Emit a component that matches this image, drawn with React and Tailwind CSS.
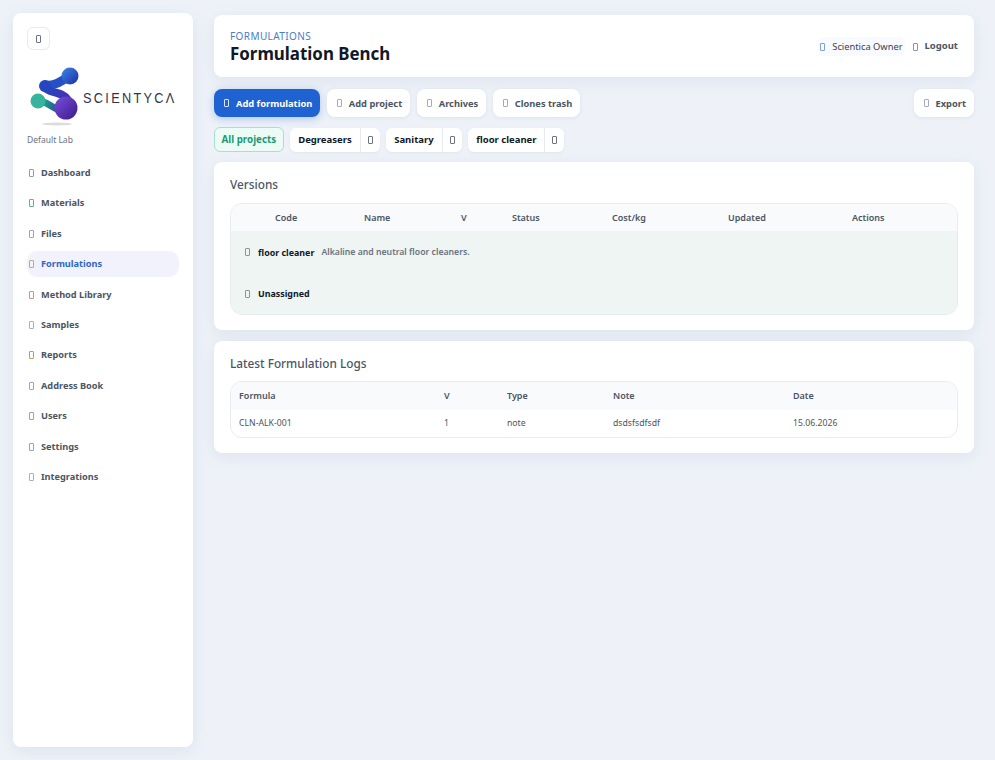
import React from "react";

const font = "font-['Noto_Sans','Open_Sans',sans-serif]";

const navItems = [
  { label: "Dashboard", color: "border-[#7f9fd6]" },
  { label: "Materials", color: "border-[#59b59a]" },
  { label: "Files", color: "border-[#a99ac9]" },
  { label: "Formulations", color: "border-[#c2a878]", active: true },
  { label: "Method Library", color: "border-[#d98a8a]" },
  { label: "Samples", color: "border-[#8fbdb8]" },
  { label: "Reports", color: "border-[#c49a55]" },
  { label: "Address Book", color: "border-[#ab97dc]" },
  { label: "Users", color: "border-[#8ea3c9]" },
  { label: "Settings", color: "border-[#8ea3c9]" },
  { label: "Integrations", color: "border-[#9db0d6]" },
];

const versionCols = ["", "Code", "Name", "V", "Status", "Cost/kg", "Updated", "Actions"];
const versionWidths = ["w-[36px]", "w-[89px]", "w-[97px]", "w-[51px]", "w-[100px]", "w-[116px]", "w-[124px]", "w-[114px]"];
const logCols = ["Formula", "V", "Type", "Note", "Date"];
const logWidths = ["w-[205px]", "w-[63px]", "w-[106px]", "w-[180px]", "w-[173px]"];

// missing-glyph box, the icon font never loaded in the source page
const Tofu = ({ className = "border-[#8b94a3]" }) => (
  <span className={`inline-block h-[8px] w-[5px] shrink-0 rounded-[1px] border ${className}`} />
);

const Logo = () => (
  <div className="flex h-[66px] items-center">
    <svg width="54" height="66" viewBox="0 0 54 66" fill="none" className="shrink-0">
      <defs>
        <linearGradient id="blue" x1="0" y1="0" x2="1" y2="1">
          <stop offset="0" stopColor="#3f86e8" />
          <stop offset="1" stopColor="#1a2fa0" />
        </linearGradient>
        <linearGradient id="neck" gradientUnits="userSpaceOnUse" x1="18" y1="23" x2="41" y2="40">
          <stop offset="0" stopColor="#2149bf" />
          <stop offset="1" stopColor="#4a2cb4" />
        </linearGradient>
        <linearGradient id="teal" gradientUnits="userSpaceOnUse" x1="5" y1="36" x2="36" y2="48">
          <stop offset="0" stopColor="#46c9a8" />
          <stop offset="0.5" stopColor="#1f8d8e" />
          <stop offset="1" stopColor="#3d2aa0" />
        </linearGradient>
        <linearGradient id="purple" x1="0" y1="0" x2="1" y2="1">
          <stop offset="0" stopColor="#7a4fe0" />
          <stop offset="1" stopColor="#3a1a88" />
        </linearGradient>
      </defs>
      <ellipse cx="30" cy="62" rx="15" ry="1.5" fill="#dcdce0" />
      <path d="M18 23 C26 24 32 21 41 15" stroke="#2550c8" strokeWidth="9" strokeLinecap="round" />
      <path d="M17 25 C22 32 34 28 41 38" stroke="url(#neck)" strokeWidth="8" strokeLinecap="round" />
      <path d="M11 39 C20 38 24 47 36 49" stroke="url(#teal)" strokeWidth="7" strokeLinecap="round" />
      <circle cx="43" cy="14" r="8.5" fill="url(#blue)" />
      <circle cx="18" cy="24" r="6" fill="#2447c0" />
      <circle cx="11" cy="39" r="7.5" fill="#37b49d" />
      <circle cx="39" cy="46" r="11.5" fill="url(#purple)" />
    </svg>
    <span className="ml-[2px] mt-[4px] origin-left scale-x-[0.85] text-[15px] leading-none tracking-[2.7px] text-[#33334a] font-['Liberation_Sans',sans-serif]">
      SCIENTYCΛ
    </span>
  </div>
);

const Sidebar = () => (
  <aside className="flex h-[734px] w-[180px] shrink-0 flex-col rounded-[8px] bg-white p-[14px] shadow-[0_4px_16px_rgba(120,140,180,0.14)]">
    <button className="flex h-[23px] w-[23px] items-center justify-center rounded-[6px] border border-[#e6e9ef] bg-white">
      <Tofu className="border-[#6b7280]" />
    </button>
    <div className="mt-[12px]">
      <Logo />
    </div>
    <p className="mt-[6px] text-[8.5px] leading-[12px] text-[#6b7280]">Default Lab</p>
    <nav className="mt-[14px] flex w-[152px] flex-col gap-[4.4px]">
      {navItems.map((item) => (
        <a
          key={item.label}
          className={`flex h-[26px] items-center gap-[7px] rounded-[10px] pl-[2px] text-[9.2px] font-bold ${
            item.active ? "bg-[#f2f2fc] text-[#2f66c4]" : "text-[#4b5563]"
          }`}
        >
          <Tofu className={item.color} />
          {item.label}
        </a>
      ))}
    </nav>
  </aside>
);

const ToolButton = ({ label, primary }) => (
  <button
    className={`flex h-[28px] items-center gap-[7px] rounded-[8px] pl-[10px] pr-[8px] text-[9.3px] font-bold ${
      primary
        ? "bg-[#1f63d2] text-white shadow-[0_2px_8px_rgba(31,99,210,0.3)]"
        : "bg-white text-[#4b5563] shadow-[0_1px_4px_rgba(120,140,180,0.14)]"
    }`}
  >
    <Tofu className={primary ? "border-[#dbe6fa]" : "border-[#a4abb6]"} />
    <span className="pt-[1px]">{label}</span>
  </button>
);

const ProjectChip = ({ label }) => (
  <div className="flex h-[24px] items-center rounded-[6px] bg-white text-[9.5px] font-bold text-[#111827] shadow-[0_1px_3px_rgba(120,140,180,0.12)]">
    <span className="px-[8px] pt-[1px]">{label}</span>
    <span className="flex h-full w-[20px] items-center justify-center border-l border-[#e8ebf0]">
      <Tofu className="border-[#6b7280]" />
    </span>
  </div>
);

const GroupRow = ({ name, note }) => (
  <tr className="h-[41.5px] bg-[#eef5f3]">
    <td colSpan={8} className="pl-[14px] pt-[1px]">
      <div className="flex items-center">
        <Tofu className="border-[#8b94a3]" />
        <span className="ml-[8px] text-[8.9px] font-bold text-[#111827]">{name}</span>
        {note && <span className="ml-[7px] text-[8.7px] font-semibold text-[#6b7280]">{note}</span>}
      </div>
    </td>
  </tr>
);

const Card = ({ title, titleClass, children }) => (
  <section className="rounded-[8px] bg-white px-[16px] pb-[15px] pt-[14px] shadow-[0_4px_16px_rgba(120,140,180,0.14)]">
    <h2 className={`text-[11.8px] font-medium leading-[17px] text-[#4b5563] ${titleClass}`}>{title}</h2>
    <div className="overflow-hidden rounded-[12px] border border-[#e8ebf0]">{children}</div>
  </section>
);

export default function App() {
  return (
    <div className={`${font} flex min-h-[760px] gap-[21px] bg-[#eef2f8] pl-[13px] pr-[21px] pt-[13px]`}>
      <Sidebar />
      <main className="flex w-[760px] flex-col pt-[2px]">
        <header className="flex h-[62px] items-center justify-between rounded-[8px] bg-white pl-[16px] pr-[16px] shadow-[0_4px_16px_rgba(120,140,180,0.14)]">
          <div className="pt-[4px]">
            <p className="text-[10px] leading-[12px] tracking-[0.4px] text-[#4a7cc9]">FORMULATIONS</p>
            <h1 className="text-[16.9px] font-bold leading-[24px] text-[#111827]">Formulation Bench</h1>
          </div>
          <div className="flex items-center gap-[8px] pt-[1px]">
            <span className="flex items-center gap-[7px] rounded-[6px] bg-[#f8fafd] py-[3px] pl-[2px] pr-[2px] text-[9.3px] text-[#374151]">
              <Tofu className="border-[#7f9fd6]" />
              Scientica Owner
            </span>
            <span className="flex items-center gap-[7px] text-[9.5px] font-bold text-[#4b5563]">
              <Tofu className="border-[#7f93bd]" />
              Logout
            </span>
          </div>
        </header>

        <div className="mt-[12px] flex gap-[6.5px]">
          <ToolButton label="Add formulation" primary />
          <ToolButton label="Add project" />
          <ToolButton label="Archives" />
          <ToolButton label="Clones trash" />
          <div className="ml-auto">
            <ToolButton label="Export" />
          </div>
        </div>

        <div className="mt-[10px] flex items-center gap-[6.5px]">
          <button className="h-[25px] rounded-[6px] border border-[#a9e0cd] bg-[#ecfbf5] px-[6.5px] pt-[1px] text-[9.8px] font-bold text-[#1b9a72]">
            All projects
          </button>
          <ProjectChip label="Degreasers" />
          <ProjectChip label="Sanitary" />
          <ProjectChip label="floor cleaner" />
        </div>

        <div className="mt-[10px]">
          <Card title="Versions" titleClass="mb-[10px]">
            <table className="w-full table-fixed border-collapse text-left">
              <colgroup>
                {versionWidths.map((w, i) => (
                  <col key={i} className={w} />
                ))}
              </colgroup>
              <thead>
                <tr className="h-[27px] bg-[#f8fafc] text-[9px] text-[#4b5563]">
                  {versionCols.map((col, i) => (
                    <th key={i} className="pl-[8px] font-semibold">
                      {col}
                    </th>
                  ))}
                </tr>
              </thead>
              <tbody>
                <GroupRow name="floor cleaner" note="Alkaline and neutral floor cleaners." />
                <GroupRow name="Unassigned" />
              </tbody>
            </table>
          </Card>
        </div>

        <div className="mt-[11px]">
          <Card title="Latest Formulation Logs" titleClass="mb-[9px]">
            <table className="w-full table-fixed border-collapse text-left">
              <colgroup>
                {logWidths.map((w, i) => (
                  <col key={i} className={w} />
                ))}
              </colgroup>
              <thead>
                <tr className="h-[28px] bg-[#f8fafc] text-[9px] text-[#4b5563]">
                  {logCols.map((col) => (
                    <th key={col} className="pl-[8px] font-semibold">
                      {col}
                    </th>
                  ))}
                </tr>
              </thead>
              <tbody>
                <tr className="h-[27px] text-[8.7px] text-[#4b5563]">
                  {["CLN-ALK-001", "1", "note", "dsdsfsdfsdf", "15.06.2026"].map((v) => (
                    <td key={v} className="pl-[8px] pt-[1px]">
                      {v}
                    </td>
                  ))}
                </tr>
              </tbody>
            </table>
          </Card>
        </div>
      </main>
    </div>
  );
}
